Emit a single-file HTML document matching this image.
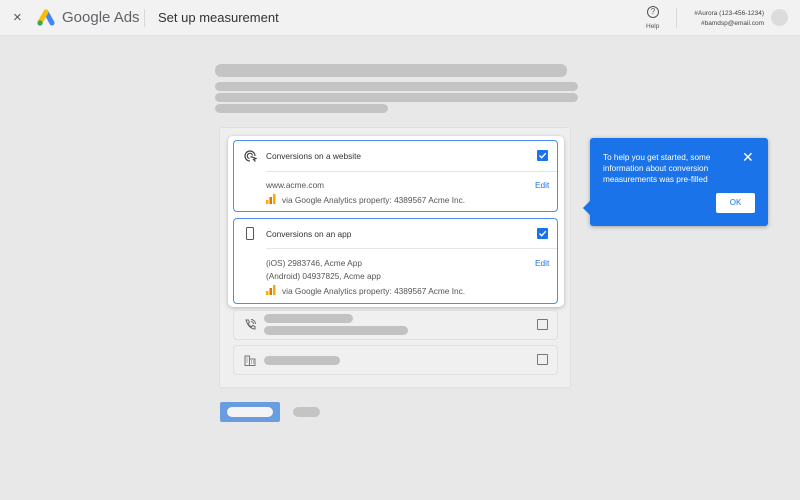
<!DOCTYPE html>
<html><head><style>
*{margin:0;padding:0;box-sizing:border-box}
body{width:800px;height:500px;background:#e8e8e8;font-family:"Liberation Sans",Arial,sans-serif;position:relative;overflow:hidden}
.a{position:absolute}
.bar{position:absolute;background:#c4c4c4;border-radius:6px}
.t{font-size:8.3px;color:#555;position:absolute;white-space:nowrap}
.cb{position:absolute;width:11px;height:11px;background:#1a73e8;border-radius:1px}
.cbe{position:absolute;width:11px;height:11px;border:1.5px solid #777;border-radius:1px}
.card{position:absolute;border:1.3px solid #4f8df0;border-radius:4px;background:#fff}
.gcard{position:absolute;border:1px solid #e0e0e0;border-radius:4px;background:#f0f0f0}
</style></head><body>
<div class="a" style="left:0;top:0;width:800px;height:36px;background:#f2f2f2;border-bottom:1px solid #e2e2e2"></div>
<div class="a" style="left:13px;top:9px;font-size:15px;color:#555">×</div>
<svg class="a" style="left:36px;top:9px" width="20" height="18" viewBox="0 0 20 18"><line x1="10" y1="3" x2="16" y2="14" stroke="#4285f4" stroke-width="5" stroke-linecap="round"/><line x1="10" y1="3" x2="4.5" y2="12.5" stroke="#fbbc04" stroke-width="5" stroke-linecap="round"/><circle cx="4" cy="14" r="2.6" fill="#34a853"/></svg>
<div class="a" style="left:62px;top:9px;font-size:15px;color:#5f6368">Google Ads</div>
<div class="a" style="left:144px;top:9px;width:1px;height:18px;background:#d8d8d8"></div>
<div class="a" style="left:158px;top:10px;font-size:13px;color:#333">Set up measurement</div>
<div class="a" style="left:647px;top:6px;width:12px;height:12px;border:1.3px solid #555;border-radius:50%;font-size:8px;text-align:center;line-height:10px;color:#555">?</div>
<div class="a" style="left:646px;top:23px;font-size:6.5px;color:#555">Help</div>
<div class="a" style="left:676px;top:8px;width:1px;height:20px;background:#d8d8d8"></div>
<div class="a" style="left:682px;top:9px;font-size:6.5px;color:#444;text-align:right;width:82px;line-height:10px">#Aurora (123-456-1234)<br>#bamdsp@email.com</div>
<div class="a" style="left:771px;top:9px;width:17px;height:17px;border-radius:50%;background:#dcdcdc"></div>

<div class="bar" style="left:215px;top:64px;width:352px;height:13px"></div>
<div class="bar" style="left:215px;top:82px;width:363px;height:9px"></div>
<div class="bar" style="left:215px;top:93px;width:363px;height:9px"></div>
<div class="bar" style="left:215px;top:104px;width:173px;height:9px"></div>

<div class="a" style="left:219px;top:127px;width:352px;height:261px;background:#efefef;border:1px solid #e0e0e0;border-radius:3px"></div>
<div class="a" style="left:228px;top:136px;width:336px;height:171px;background:#fff;border-radius:5px;box-shadow:0 1px 4px rgba(0,0,0,.25)"></div>

<div class="card" style="left:233px;top:140px;width:325px;height:72px"></div>
<svg class="a" style="left:244px;top:150px" width="13" height="13" viewBox="0 0 13 13" fill="none" stroke="#444" stroke-width="1.2"><path d="M11 6A5 5 0 1 0 6 11"/><path d="M8.5 5.5A2.6 2.6 0 1 0 5.5 8.5"/><path d="M6.5 6.5L12 8.5L9.5 9.5L11.5 11.5"/></svg>
<div class="t" style="left:266px;top:151px;color:#333">Conversions on a website</div>
<div class="cb" style="left:537px;top:150px"></div>
<svg class="a" style="left:538px;top:151px" width="9" height="9"><path d="M1.5 4.5L3.7 6.7L7.8 2.2" stroke="#fff" stroke-width="1.4" fill="none"/></svg>
<div class="a" style="left:266px;top:171px;width:291px;height:1px;background:#e6e6e6"></div>
<div class="t" style="left:266px;top:180px">www.acme.com</div>
<div class="t" style="left:535px;top:180px;color:#1a73e8">Edit</div>
<svg class="a" style="left:266px;top:194px" width="10" height="10"><rect x="0" y="6" width="2.5" height="4" fill="#f9ab00"/><rect x="3.5" y="3" width="2.5" height="7" fill="#e37400"/><rect x="7" y="0" width="2.5" height="10" fill="#f9ab00"/></svg>
<div class="t" style="left:282px;top:195px">via Google Analytics property: 4389567 Acme Inc.</div>

<div class="card" style="left:233px;top:218px;width:325px;height:86px"></div>
<div class="a" style="left:246px;top:227px;width:8px;height:13px;border:1.3px solid #555;border-radius:1.5px"></div>
<div class="t" style="left:266px;top:229px;color:#333">Conversions on an app</div>
<div class="cb" style="left:537px;top:228px"></div>
<svg class="a" style="left:538px;top:229px" width="9" height="9"><path d="M1.5 4.5L3.7 6.7L7.8 2.2" stroke="#fff" stroke-width="1.4" fill="none"/></svg>
<div class="a" style="left:266px;top:248px;width:291px;height:1px;background:#e6e6e6"></div>
<div class="t" style="left:266px;top:258px">(iOS) 2983746, Acme App</div>
<div class="t" style="left:535px;top:258px;color:#1a73e8">Edit</div>
<div class="t" style="left:266px;top:271px">(Android) 04937825, Acme app</div>
<svg class="a" style="left:266px;top:285px" width="10" height="10"><rect x="0" y="6" width="2.5" height="4" fill="#f9ab00"/><rect x="3.5" y="3" width="2.5" height="7" fill="#e37400"/><rect x="7" y="0" width="2.5" height="10" fill="#f9ab00"/></svg>
<div class="t" style="left:282px;top:286px">via Google Analytics property: 4389567 Acme Inc.</div>

<div class="gcard" style="left:233px;top:310px;width:325px;height:30px"></div>
<svg class="a" style="left:244px;top:318px" width="13" height="13" viewBox="0 0 13 13" fill="none" stroke="#666" stroke-width="1"><path d="M2 2L4.5 2L5.5 4.5L4 5.5Q5.5 8 7.5 9L8.5 7.5L11 8.5L11 11Q5 11 2 2Z"/><path d="M7 1.5A4.5 4.5 0 0 1 11.5 6M7 3.5A2.5 2.5 0 0 1 9.5 6"/></svg>
<div class="bar" style="left:264px;top:314px;width:89px;height:9px;background:#c2c2c2"></div>
<div class="bar" style="left:264px;top:326px;width:144px;height:9px;background:#c2c2c2"></div>
<div class="cbe" style="left:537px;top:319px"></div>

<div class="gcard" style="left:233px;top:345px;width:325px;height:30px"></div>
<svg class="a" style="left:244px;top:355px" width="12" height="11" viewBox="0 0 12 11" fill="none" stroke="#777" stroke-width="1"><path d="M1 10.5V1H5.5V10.5M5.5 4H11V10.5H0.5M7 6h1M9 6h1M7 8h1M9 8h1M2.5 3h1M2.5 5h1M2.5 7h1"/></svg>
<div class="bar" style="left:264px;top:356px;width:76px;height:9px;background:#c2c2c2"></div>
<div class="cbe" style="left:537px;top:354px"></div>

<div class="a" style="left:220px;top:402px;width:60px;height:20px;background:#6a9de0;border-radius:2px"></div>
<div class="a" style="left:227px;top:407px;width:46px;height:10px;background:#f4f4f4;border-radius:5px"></div>
<div class="bar" style="left:293px;top:407px;width:27px;height:10px"></div>

<div class="a" style="left:590px;top:138px;width:178px;height:88px;background:#1a73e8;border-radius:3px;box-shadow:0 1px 4px rgba(0,0,0,.3)"></div>
<div class="a" style="left:585px;top:203px;width:10px;height:10px;background:#1a73e8;transform:rotate(45deg)"></div>
<div class="a" style="left:603px;top:152px;font-size:8.2px;color:#fff;line-height:11px">To help you get started, some<br>information about conversion<br>measurements was pre-filled</div>
<div class="a" style="left:742px;top:150px;font-size:14px;color:#fff;line-height:14px">✕</div>
<div class="a" style="left:716px;top:193px;width:39px;height:20px;background:#fff;border-radius:2px;font-size:8px;color:#1a73e8;text-align:center;line-height:20px">OK</div>
</body></html>
